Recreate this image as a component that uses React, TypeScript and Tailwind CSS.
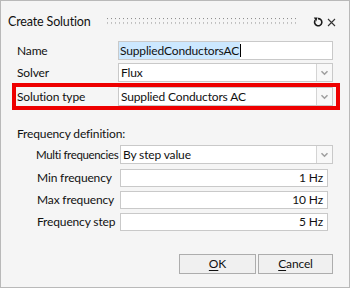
import React from "react"

function Chevron() {
  return (
    <svg width="9" height="6" viewBox="0 0 9 6">
      <path d="M1.5 1.2 L4.5 4.2 L7.5 1.2" fill="none" stroke="#a0a0a0" strokeWidth="1.6" />
    </svg>
  )
}

function Combo({ value, className = "" }: { value: string; className?: string }) {
  return (
    <div className={`flex h-[19px] border border-[#c9c9c9] bg-white ${className}`}>
      <div className="flex flex-1 items-center whitespace-nowrap pl-[2px] leading-none">{value}</div>
      <div className="flex w-[16px] items-center justify-center border-l border-[#d4d4d4] bg-[#f8f8f8]">
        <Chevron />
      </div>
    </div>
  )
}

function NumRow({ label, value, className = "" }: { label: string; value: string; className?: string }) {
  return (
    <div className={`flex items-center ${className}`}>
      <div className="w-[119px] shrink-0 whitespace-nowrap pl-[36px]">{label}</div>
      <div className="mr-[21px] flex h-[18px] flex-1 items-center justify-end border border-[#c9c9c9] bg-white pr-[4px] leading-none">
        {value}
      </div>
    </div>
  )
}

function Row({ label, children, className = "" }: { label: string; children: React.ReactNode; className?: string }) {
  return (
    <div className={`flex items-center pr-[16px] ${className}`}>
      <div className="w-[117px] shrink-0 whitespace-nowrap pl-[16px]">{label}</div>
      <div className="flex-1">{children}</div>
    </div>
  )
}

export default function App() {
  return (
    <div
      className="h-[289px] w-[351px] bg-white text-[12px] tracking-[-0.15px] text-[#111]"
      style={{ fontFamily: 'Lato, "Liberation Sans", Arial, sans-serif' }}
    >
      <div className="flex h-[288px] w-[350px] flex-col border border-[#b9b9b9] bg-[#f5f5f5]">
        {/* Title bar */}
        <div className="flex h-[30px] items-center pl-[7px] pt-[12px]">
          <span className="w-[99px] whitespace-nowrap text-[12.5px]">Create Solution</span>
          <svg width="192" height="9" className="mt-[1px]">
            <defs>
              <pattern id="dots" width="4" height="4.5" patternUnits="userSpaceOnUse">
                <rect x="0" y="0" width="1" height="1" fill="#8a8a8a" />
              </pattern>
            </defs>
            <rect x="0" y="0" width="192" height="9" fill="url(#dots)" />
          </svg>
          <svg width="10" height="10" viewBox="0 0 10 10" className="ml-[14px]">
            <path d="M2.2 3.2 A3.6 3.6 0 1 0 5 1.6" fill="none" stroke="#1b1b1b" strokeWidth="1.6" />
            <path d="M0.8 0.6 L4.6 0.6 L3.2 4.4 Z" fill="#1b1b1b" />
          </svg>
          <svg width="9" height="9" viewBox="0 0 9 9" className="ml-[4px]">
            <path d="M1 1 L8 8 M8 1 L1 8" stroke="#333" strokeWidth="1.1" />
          </svg>
        </div>

        <Row label="Name" className="mt-[10px]">
          <div className="flex h-[19px] items-stretch border border-[#c9c9c9] bg-white">
            <span className="flex items-center whitespace-nowrap bg-[#cce8ff] pl-[1px] pr-[1px] leading-none">SuppliedConductorsAC</span>
            <span className="my-[2px] w-px bg-black" />
          </div>
        </Row>
        <Row label="Solver" className="mt-[3px]">
          <Combo value="Flux" />
        </Row>

        <div className="ml-[11px] mr-[9px] mt-[1px] border-4 border-[#ee0000] pr-[3px]">
          <div className="flex items-center">
            <div className="w-[102px] shrink-0 whitespace-nowrap pl-[1px]">Solution type</div>
            <Combo value="Supplied Conductors AC" className="flex-1" />
          </div>
        </div>

        <div className="mt-[15px] pl-[16px]">Frequency definition:</div>

        <div className="mt-[2px] flex items-center pr-[16px]">
          <div className="w-[119px] shrink-0 whitespace-nowrap pl-[35px] text-[11.5px] tracking-[-0.35px]">Multi frequencies</div>
          <Combo value="By step value" className="flex-1" />
        </div>
        <NumRow label="Min frequency" value="1 Hz" className="mt-[5px]" />
        <NumRow label="Max frequency" value="10 Hz" className="mt-[4px]" />
        <NumRow label="Frequency step" value="5 Hz" className="mt-[4px]" />

        <div className="mt-[23px] flex justify-end gap-[2px] pr-[16px]">
          <button className="h-[20px] w-[77px] border border-[#adadad] bg-[#f0f0f0] leading-none">
            <span className="underline underline-offset-2">O</span>K
          </button>
          <button className="h-[20px] w-[75px] border border-[#adadad] bg-[#f0f0f0] leading-none">
            <span className="underline underline-offset-2">C</span>ancel
          </button>
        </div>
      </div>
    </div>
  )
}
